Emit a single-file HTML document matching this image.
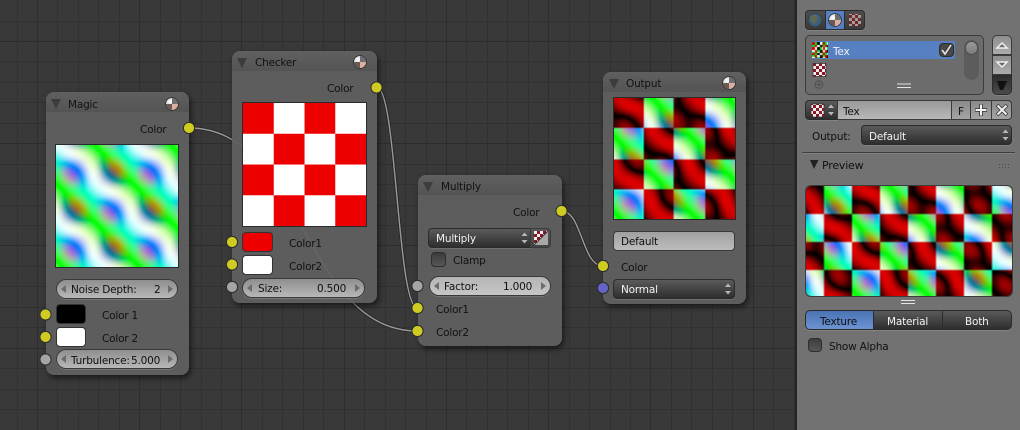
<!DOCTYPE html>
<html><head><meta charset="utf-8"><style>
html,body{margin:0;padding:0;background:#393939}
#r{position:relative;width:1020px;height:430px;overflow:hidden;background:#393939;font:10.5px "DejaVu Sans",sans-serif;color:#111}
#r>*{position:absolute;box-sizing:border-box}
.n{background:rgba(98,98,98,.9);border-radius:8px;box-shadow:2px 3px 6px rgba(0,0,0,.55)}
.h{position:absolute;left:0;right:0;top:0;height:20px;background:linear-gradient(#606060,#545454);border-radius:8px 8px 0 0}
.t{white-space:nowrap;line-height:14px;height:14px;margin-top:1px;letter-spacing:-.2px}
.w{color:#f2f2f2}
.num{border:1px solid #3a3a3a;border-radius:10px;background:linear-gradient(#8e8e8e,#b8b8b8);box-shadow:0 1px 0 rgba(255,255,255,.15)}
.dd{border:1px solid #2c2c2c;border-radius:4px;background:linear-gradient(#5a5a5a,#2e2e2e);box-shadow:0 1px 0 rgba(255,255,255,.12)}
.sw{border:1px solid #333;border-radius:4px}
.cb{border:1px solid #2e2e2e;border-radius:4px;background:linear-gradient(#3c3c3c,#565656)}
.b{border:1px solid #3a3a3a;background:linear-gradient(#a0a0a0,#bcbcbc)}
canvas{display:block}
.im{border:1px solid #2a2a2a}
</style></head><body><div id="r">
<svg style="left:0;top:0" width="1020" height="430">
<g id="grid" stroke="#313131" stroke-width="1"></g>
<g fill="none" stroke-linecap="round">
<path d="M189 128C303 128 303.5 331 417.5 331" stroke="#262626" stroke-width="3.2"/>
<path d="M189 128C303 128 303.5 331 417.5 331" stroke="#9a9a9a" stroke-width="1.4"/>
<path d="M376.5 87C397 87 397 308 417.5 308" stroke="#262626" stroke-width="3.2"/>
<path d="M376.5 87C397 87 397 308 417.5 308" stroke="#9a9a9a" stroke-width="1.4"/>
<path d="M561.5 211C582 211 582 266 603 266" stroke="#262626" stroke-width="3.2"/>
<path d="M561.5 211C582 211 582 266 603 266" stroke="#9a9a9a" stroke-width="1.4"/>
</g></svg>

<div class="n" style="left:46px;top:92px;width:143px;height:283px"><div class="h"></div></div>
<div class="n" style="left:232px;top:51px;width:145px;height:252px"><div class="h"></div></div>
<div class="n" style="left:418px;top:175px;width:144px;height:171px"><div class="h"></div></div>
<div class="n" style="left:603px;top:72px;width:143px;height:232px"><div class="h"></div></div>

<!-- panel -->
<div style="left:795px;top:0;width:225px;height:430px;background:#727272;border-left:2px solid #242424"></div>

<!-- Magic -->
<div class="t" style="left:68px;top:97px">Magic</div>
<div class="t" style="left:140px;top:122px">Color</div>
<canvas class="im" id="c1" width="62" height="62" style="left:55px;top:144px;width:124px;height:124px"></canvas>
<div class="num" style="left:56px;top:279px;width:122px;height:20px"></div>
<div class="t" style="left:71px;top:282px">Noise Depth:</div>
<div class="t" style="left:154px;top:282px">2</div>
<div class="sw" style="left:56px;top:304px;width:30px;height:20px;background:#000"></div>
<div class="sw" style="left:56px;top:327px;width:30px;height:20px;background:#fff"></div>
<div class="t" style="left:102px;top:308px">Color 1</div>
<div class="t" style="left:102px;top:331px">Color 2</div>
<div class="num" style="left:56px;top:349px;width:122px;height:20px"></div>
<div class="t" style="left:71px;top:353px">Turbulence:</div>
<div class="t" style="left:131px;top:353px">5.000</div>

<!-- Checker -->
<div class="t" style="left:255px;top:55px">Checker</div>
<div class="t" style="left:327px;top:81px">Color</div>
<canvas class="im" id="c2" width="124" height="124" style="left:242px;top:102px;width:125px;height:125px"></canvas>
<div class="sw" style="left:242px;top:232px;width:31px;height:20px;background:#ee0000"></div>
<div class="sw" style="left:242px;top:255px;width:31px;height:20px;background:#fff"></div>
<div class="t" style="left:289px;top:236px">Color1</div>
<div class="t" style="left:289px;top:259px">Color2</div>
<div class="num" style="left:242px;top:278px;width:123px;height:20px"></div>
<div class="t" style="left:258px;top:281px">Size:</div>
<div class="t" style="left:317px;top:281px">0.500</div>

<!-- Multiply -->
<div class="t" style="left:441px;top:179px">Multiply</div>
<div class="t" style="left:513px;top:205px">Color</div>
<div class="dd" style="left:428px;top:228px;width:103px;height:20px;border-radius:4px 0 0 4px"></div>
<div class="t w" style="left:436px;top:231px">Multiply</div>
<div class="b" style="left:530px;top:228px;width:21px;height:20px;border-radius:0 4px 4px 0;background:linear-gradient(#5a5a5a,#444)"></div>
<div class="cb" style="left:431px;top:252px;width:15px;height:15px"></div>
<div class="t" style="left:453px;top:253px">Clamp</div>
<div class="num" style="left:429px;top:276px;width:122px;height:20px;background:linear-gradient(#b4b4b4,#c6c6c6)"></div>
<div class="t" style="left:444px;top:279px">Factor:</div>
<div class="t" style="left:503px;top:279px">1.000</div>
<div class="t" style="left:436px;top:302px">Color1</div>
<div class="t" style="left:436px;top:325px">Color2</div>

<!-- Output -->
<div class="t" style="left:626px;top:76px">Output</div>
<canvas class="im" id="c3" width="61" height="61" style="left:613px;top:97px;width:123px;height:123px"></canvas>
<div class="b" style="left:613px;top:231px;width:122px;height:20px;border-radius:4px"></div>
<div class="t" style="left:621px;top:234px">Default</div>
<div class="t" style="left:621px;top:260px">Color</div>
<div class="dd" style="left:613px;top:279px;width:122px;height:20px"></div>
<div class="t w" style="left:621px;top:282px">Normal</div>

<!-- Panel widgets -->
<div class="dd" style="left:805px;top:10px;width:60px;height:20px;background:linear-gradient(#4e4e4e,#3a3a3a)"></div>
<div style="left:825px;top:10px;width:20px;height:20px;background:#5680c2;border:1px solid #2c2c2c"></div>
<div style="left:805px;top:35px;width:179px;height:60px;border:1px solid #3c3c3c;border-radius:5px;background:#6c6c6c"></div>
<div style="left:812px;top:41px;width:143px;height:18px;background:#5680c2"></div>
<canvas id="ic1" width="16" height="16" style="left:812px;top:42px;width:16px;height:16px"></canvas>
<div class="t" style="left:833px;top:44px;color:#f2f2f2">Tex</div>
<div class="cb" style="left:939px;top:43px;width:15px;height:14px;background:#474747"></div>
<div style="left:964px;top:40px;width:15px;height:40px;border-radius:8px;background:#5c5c5c"></div>
<div style="left:965px;top:41px;width:13px;height:14px;border-radius:7px;background:linear-gradient(#9a9a9a,#7c7c7c);border:1px solid #4c4c4c"></div>
<div class="b" style="left:992px;top:35px;width:20px;height:20px;border-radius:5px 5px 0 0;background:linear-gradient(#8e8e8e,#ababab)"></div>
<div class="b" style="left:992px;top:55px;width:20px;height:20px;background:linear-gradient(#8e8e8e,#ababab)"></div>
<div class="dd" style="left:992px;top:75px;width:20px;height:20px;border-radius:0 0 5px 5px;background:linear-gradient(#2e2e2e,#4a4a4a)"></div>

<div class="dd" style="left:805px;top:100px;width:33px;height:20px;border-radius:4px 0 0 4px"></div>
<div class="b" style="left:837px;top:100px;width:115px;height:20px;background:linear-gradient(#999,#b8b8b8)"></div>
<div class="t" style="left:843px;top:104px">Tex</div>
<div class="b" style="left:951px;top:100px;width:20px;height:20px;background:linear-gradient(#8a8a8a,#a4a4a4)"></div>
<div class="t" style="left:958px;top:104px">F</div>
<div class="b" style="left:970px;top:100px;width:22px;height:20px;background:linear-gradient(#8a8a8a,#a4a4a4)"></div>
<div class="b" style="left:991px;top:100px;width:21px;height:20px;border-radius:0 4px 4px 0;background:linear-gradient(#8a8a8a,#a4a4a4)"></div>

<div class="t" style="left:812px;top:129px">Output:</div>
<div class="dd" style="left:861px;top:125px;width:151px;height:20px"></div>
<div class="t w" style="left:869px;top:129px">Default</div>
<div style="left:802px;top:152px;width:213px;height:1px;background:#3e3e3e;box-shadow:0 1px 0 #828282"></div>
<div class="t" style="left:822px;top:158px;font-size:11px">Preview</div>
<canvas id="c4" width="103" height="55" style="left:806px;top:186px;width:206px;height:110px;border-radius:5px"></canvas>
<div style="left:805px;top:185px;width:208px;height:112px;border:1px solid #3c3c3c;border-radius:6px"></div>

<div class="dd" style="left:805px;top:310px;width:69px;height:20px;border-radius:5px 0 0 5px;background:linear-gradient(#4a73b4,#6c93d2)"></div>
<div class="dd" style="left:873px;top:310px;width:70px;height:20px;border-radius:0"></div>
<div class="dd" style="left:942px;top:310px;width:70px;height:20px;border-radius:0 5px 5px 0"></div>
<div class="t" style="left:820px;top:314px">Texture</div>
<div class="t w" style="left:887px;top:314px">Material</div>
<div class="t w" style="left:965px;top:314px">Both</div>
<div class="cb" style="left:808px;top:338px;width:14px;height:14px;background:linear-gradient(#3e3e3e,#565656)"></div>
<div class="t" style="left:829px;top:339px">Show Alpha</div>

<!-- icons overlay -->
<svg style="left:0;top:0" width="1020" height="430">
<defs>
<radialGradient id="sg" cx=".35" cy=".3" r=".8"><stop offset="0" stop-color="#fff"/><stop offset="1" stop-color="#aaa"/></radialGradient>
<symbol id="mat" overflow="visible">
<circle r="6.8" fill="#2a2a2a"/><circle r="6" fill="url(#sg)"/>
<path d="M0 0V-6A6 6 0 0 1 6 0Z" fill="#6e6e6e"/>
<path d="M0 0V6A6 6 0 0 1 -6 0Z" fill="#6a5a55"/>
<path d="M0 0H6A6 6 0 0 1 0 6Z" fill="#dcaea0"/>
</symbol>
<pattern id="tc" width="6" height="6" patternUnits="userSpaceOnUse"><rect width="6" height="6" fill="#eee"/><rect width="3" height="3" fill="#8a1525"/><rect x="3" y="3" width="3" height="3" fill="#8a1525"/></pattern>
<pattern id="tm" width="6" height="6" patternUnits="userSpaceOnUse"><rect width="6" height="6" fill="#a89a98"/><rect width="3" height="3" fill="#6e2a2a"/><rect x="3" y="3" width="3" height="3" fill="#6e2a2a"/></pattern>
<symbol id="sk" overflow="visible"><circle r="5.6" fill="#cfcb22" stroke="#2c2c2c" stroke-width="1"/></symbol>
<symbol id="sg2" overflow="visible"><circle r="5.6" fill="#a5a5a5" stroke="#2c2c2c" stroke-width="1"/></symbol>
<symbol id="ud" overflow="visible"><path d="M-3 -2L0 -5.5L3 -2ZM-3 2L0 5.5L3 2Z" fill="#b8b8b8"/></symbol>
</defs>
<!-- header triangles -->
<g fill="#3c3c3c">
<path d="M51 99H61L56 109Z"/><path d="M237 58H247L242 68Z"/><path d="M423 182H433L428 192Z"/><path d="M609 79H619L614 89Z"/>
<path d="M810 160H818.500L814 169Z" fill="#222"/>
</g>
<use href="#mat" x="172" y="104"/><use href="#mat" x="360" y="62"/><use href="#mat" x="729" y="83"/>
<!-- sockets -->
<use href="#sk" x="189" y="128"/><use href="#sk" x="45.500" y="314.500"/><use href="#sk" x="45.500" y="337"/><use href="#sg2" x="45.500" y="359.500"/>
<use href="#sk" x="376.500" y="87.500"/><use href="#sk" x="232" y="242"/><use href="#sk" x="232" y="264.500"/><use href="#sg2" x="232" y="287"/>
<use href="#sk" x="561.500" y="211"/><use href="#sg2" x="417.500" y="286"/><use href="#sk" x="417.500" y="308"/><use href="#sk" x="417.500" y="331"/>
<use href="#sk" x="603" y="266"/><circle cx="603" cy="288" r="5.600" fill="#6464c8" stroke="#2c2c2c"/>
<!-- number arrows -->
<g fill="#6c6c6c">
<path d="M66 285V293L61 289ZM168 285V293L173 289Z"/>
<path d="M66 355V363L61 359ZM168 355V363L173 359Z"/>
<path d="M252 284V292L247 288ZM355 284V292L360 288Z"/>
<path d="M439 282V290L434 286ZM541 282V290L546 286Z"/>
</g>
<use href="#ud" x="524.500" y="238"/><use href="#ud" x="728" y="289"/><use href="#ud" x="1005.500" y="135"/><use href="#ud" x="831" y="110"/>
<!-- mix icon -->
<rect x="534" y="231" width="14" height="14" fill="#8e8e8e"/>
<path d="M534 231H548L534 245Z" fill="url(#tc)"/><path d="M534 245L548 231V245Z" fill="#a8a8a8"/><path d="M534 245L548 231" stroke="#333" fill="none"/>
<!-- panel tabs icons -->
<circle cx="815" cy="20" r="6.800" fill="#3f5f78"/><path d="M810 16L816 14.500L818 19L814 24L811 21Z" fill="#5d6a52"/><circle cx="815" cy="20" r="6.800" fill="none" stroke="#2e3a42" stroke-width=".7"/>
<use href="#mat" x="835" y="20"/>
<rect x="849" y="14" width="12" height="12" fill="url(#tm)"/>
<rect x="813" y="63.500" width="13" height="13" fill="url(#tc)" stroke="#333" stroke-width=".7"/>
<rect x="811" y="104" width="13" height="13" fill="url(#tc)" stroke="#333" stroke-width=".7"/>
<circle cx="819" cy="84.500" r="3.800" fill="none" stroke="#4e4e4e"/><path d="M819 82V87M816.500 84.500H821.500" stroke="#4e4e4e"/>
<path d="M897 84H911M897 87.500H911" stroke="#e4e4e4" stroke-width="1"/>
<path d="M901 300.500H915M901 303.500H915" stroke="#e4e4e4" stroke-width="1"/>
<path d="M942 50L945 54L951 45" fill="none" stroke="#222" stroke-width="3"/><path d="M942 50L945 54L951 45" fill="none" stroke="#d8d8d8" stroke-width="2"/>
<path d="M997 48L1002 43L1007 48Z" fill="#666" stroke="#f0f0f0" stroke-width="1.500"/>
<path d="M997 62L1002 67L1007 62Z" fill="#666" stroke="#f0f0f0" stroke-width="1.500"/>
<path d="M997 81H1007L1003 90H1000Z" fill="#111"/>
<path d="M981 104V116M975 110H987" stroke="#333" stroke-width="3.500"/><path d="M981 104.500V115.500M975.500 110H986.500" stroke="#f2f2f2" stroke-width="2"/>
<path d="M997 105L1007 115M1007 105L997 115" stroke="#333" stroke-width="3.600"/><path d="M997.500 105.500L1006.500 114.500M1006.500 105.500L997.500 114.500" stroke="#f2f2f2" stroke-width="2"/>
<g fill="#4a4a4a"><rect x="999" y="164" width="1" height="1"/><rect x="1002" y="164" width="1" height="1"/><rect x="1005" y="164" width="1" height="1"/><rect x="1008" y="164" width="1" height="1"/><rect x="999" y="167" width="1" height="1"/><rect x="1002" y="167" width="1" height="1"/><rect x="1005" y="167" width="1" height="1"/><rect x="1008" y="167" width="1" height="1"/></g>
</svg>
</div>
<script>
(function(){
var g=document.getElementById('grid'),s='';
var i;for(i=0;i<40;i++){var x=16.5+i*20.45;if(x<800)s+='<line x1="'+x.toFixed(0)+'.5" x2="'+x.toFixed(0)+'.5" y1="0" y2="430"'+(i%5==1?' stroke="#2d2d2d"':'')+'/>';}
for(i=0;i<22;i++){var y=20.5+i*20.45;s+='<line y1="'+y.toFixed(0)+'.5" y2="'+y.toFixed(0)+'.5" x1="0" x2="800"'+(i%5==1?' stroke="#2d2d2d"':'')+'/>';}
g.innerHTML=s;
function sr(v){v=Math.max(0,Math.min(1,v));return v<=.0031308?12.92*v:1.055*Math.pow(v,1/2.4)-.055;}
function magic(px,py){
 var pz=0,x=Math.sin((px+py+pz)*5),y=Math.cos((-px+py-pz)*5),z=-Math.cos((-px-py+pz)*5);
 y=-Math.cos(x-y+z);x=Math.cos(x-y-z);
 x/=2;y/=2;z/=2;
 return [.5-x,.5-y,.5-z];
}
function chk(px,py){return (Math.floor(px*2+1e-6)+Math.floor(py*2+1e-6))&1;}
function cl(v){return Math.max(0,Math.min(255,Math.round(v*255)));}
function paint(id,fn){var c=document.getElementById(id),w=c.width,h=c.height,X=c.getContext('2d'),D=X.createImageData(w,h);
 for(var j=0;j<h;j++)for(var k=0;k<w;k++){var v=fn(k+.5,j+.5,w,h),o=(j*w+k)*4;D.data[o]=cl(v[0]);D.data[o+1]=cl(v[1]);D.data[o+2]=cl(v[2]);D.data[o+3]=255;}
 X.putImageData(D,0,0);}
function mg(a,b){var m=magic(a,b);return [sr(m[0]),sr(m[1]),sr(m[2])];}
function combo(a,b){var m=magic(a,b);return chk(a,b)?[sr(m[0]*.85),0,0]:[sr(m[0]),sr(m[1]),sr(m[2])];}
function sq(f){return function(k,j,w,h){return f(k/w*2-1,1-j/h*2);};}
paint('c1',sq(mg));
paint('c2',sq(function(a,b){return chk(a,b)?[.93,0,0]:[1,1,1];}));
paint('c3',sq(combo));
paint('c4',function(k,j,w,h){return combo((k/w*206-103)/56,(55-j/h*110)/56);});
paint('ic1',function(k,j,w,h){var q=[[.85,0,0],[0,.9,.2],[0,0,0],[1,1,1]];return (Math.floor(k/2.67)+Math.floor(j/2.67))&1?q[(Math.floor(k/5)+Math.floor(j/5))&1?3:1]:q[(Math.floor(k/5)&1)?2:0];});
})();
</script>
</body></html>
